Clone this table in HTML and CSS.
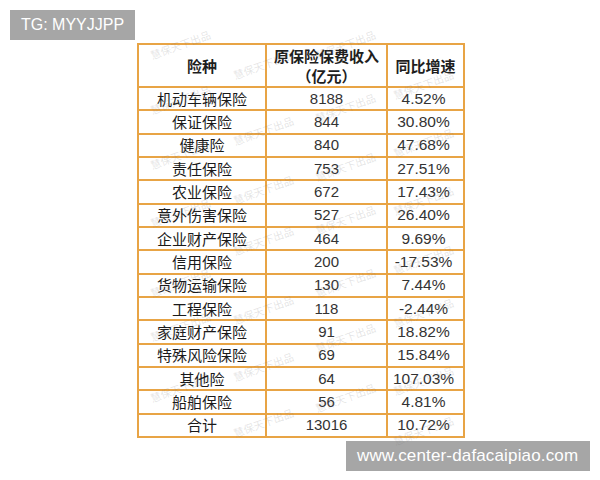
FILE: index.html
```html
<!DOCTYPE html>
<html lang="zh">
<head>
<meta charset="utf-8">
<link rel="stylesheet" href="styles.css">
</head>
<body>
<div class="page">
  <div class="tag">TG: MYYJJPP</div>
  <div class="table-wrap">
    <table class="data">
      <colgroup>
        <col class="c1"><col class="c2"><col class="c3">
      </colgroup>
      <thead>
        <tr class="head">
          <th>险种</th>
          <th>原保险保费收入<br>（亿元）</th>
          <th>同比增速</th>
        </tr>
      </thead>
      <tbody>
        <tr><td class="name">机动车辆保险</td><td class="num">8188</td><td class="pct">4.52%</td></tr>
        <tr><td class="name">保证保险</td><td class="num">844</td><td class="pct">30.80%</td></tr>
        <tr><td class="name">健康险</td><td class="num">840</td><td class="pct">47.68%</td></tr>
        <tr><td class="name">责任保险</td><td class="num">753</td><td class="pct">27.51%</td></tr>
        <tr><td class="name">农业保险</td><td class="num">672</td><td class="pct">17.43%</td></tr>
        <tr><td class="name">意外伤害保险</td><td class="num">527</td><td class="pct">26.40%</td></tr>
        <tr><td class="name">企业财产保险</td><td class="num">464</td><td class="pct">9.69%</td></tr>
        <tr><td class="name">信用保险</td><td class="num">200</td><td class="pct">-17.53%</td></tr>
        <tr><td class="name">货物运输保险</td><td class="num">130</td><td class="pct">7.44%</td></tr>
        <tr><td class="name">工程保险</td><td class="num">118</td><td class="pct">-2.44%</td></tr>
        <tr><td class="name">家庭财产保险</td><td class="num">91</td><td class="pct">18.82%</td></tr>
        <tr><td class="name">特殊风险保险</td><td class="num">69</td><td class="pct">15.84%</td></tr>
        <tr><td class="name">其他险</td><td class="num">64</td><td class="pct">107.03%</td></tr>
        <tr><td class="name">船舶保险</td><td class="num">56</td><td class="pct">4.81%</td></tr>
        <tr><td class="name">合计</td><td class="num">13016</td><td class="pct">10.72%</td></tr>
      </tbody>
    </table>
    <div class="marks" aria-hidden="true">
      <span class="wm" style="left:95px;top:16px">慧保天下出品</span>
      <span class="wm" style="left:95px;top:82px">慧保天下出品</span>
      <span class="wm" style="left:95px;top:141px">慧保天下出品</span>
      <span class="wm" style="left:95px;top:192px">慧保天下出品</span>
      <span class="wm" style="left:95px;top:261px">慧保天下出品</span>
      <span class="wm" style="left:95px;top:318px">慧保天下出品</span>
      <span class="wm" style="left:95px;top:374px">慧保天下出品</span>
      <span class="wm" style="left:177px;top:-4px">慧保天下出品</span>
      <span class="wm" style="left:177px;top:59px">慧保天下出品</span>
      <span class="wm" style="left:177px;top:118px">慧保天下出品</span>
      <span class="wm" style="left:177px;top:171px">慧保天下出品</span>
      <span class="wm" style="left:177px;top:234px">慧保天下出品</span>
      <span class="wm" style="left:177px;top:289px">慧保天下出品</span>
      <span class="wm" style="left:177px;top:349px">慧保天下出品</span>
      <span class="wm" style="left:255px;top:36px">慧保天下出品</span>
      <span class="wm" style="left:255px;top:94px">慧保天下出品</span>
      <span class="wm" style="left:255px;top:152px">慧保天下出品</span>
      <span class="wm" style="left:255px;top:211px">慧保天下出品</span>
      <span class="wm" style="left:255px;top:264px">慧保天下出品</span>
      <span class="wm" style="left:255px;top:332px">慧保天下出品</span>
      <span class="wm" style="left:255px;top:382px">慧保天下出品</span>
      <span class="wm" style="left:12px;top:-4px">慧保天下出品</span>
      <span class="wm" style="left:12px;top:51px">慧保天下出品</span>
      <span class="wm" style="left:12px;top:106px">慧保天下出品</span>
      <span class="wm" style="left:12px;top:164px">慧保天下出品</span>
      <span class="wm" style="left:12px;top:234px">慧保天下出品</span>
      <span class="wm" style="left:12px;top:278px">慧保天下出品</span>
      <span class="wm" style="left:12px;top:339px">慧保天下出品</span>
    </div>
  </div>
  <div class="site">www.center-dafacaipiao.com</div>
</div>
</body>
</html>
```

FILE: styles.css
```css
html, body {
  margin: 0;
  padding: 0;
  background: #ffffff;
}

.page {
  width: 600px;
  height: 480px;
  padding: 10px 0 0 0;
  box-sizing: border-box;
  display: flex;
  flex-direction: column;
  align-items: flex-start;
}

.tag {
  margin-left: 10px;
  width: 125px;
  height: 30px;
  background: #a6a6a6;
  color: #ffffff;
  font-family: "Liberation Sans", Arial, sans-serif;
  font-size: 16px;
  line-height: 30px;
  padding-left: 11px;
  box-sizing: border-box;
}

.table-wrap {
  position: relative;
  margin-top: 3px;
  margin-left: 137px;
}

.data {
  border-collapse: collapse;
  width: 326px;
  table-layout: fixed;
  font-family: "Noto Sans CJK SC", "Noto Sans", sans-serif;
  color: #1e1e1e;
  background: #ffffff;
}

.c1 { width: 128px; }
.c2 { width: 121px; }
.c3 { width: 77px; }

.data th,
.data td {
  border: 2px solid #e8a445;
  padding: 0;
  text-align: center;
  vertical-align: middle;
}

.head th {
  height: 41px;
  font-size: 15px;
  font-weight: 700;
  line-height: 20px;
}

.data td {
  height: 21.33px;
  font-size: 15px;
  line-height: 18px;
}

.data td.name {
  font-family: "Noto Sans CJK SC", sans-serif;
  color: #1a1a1a;
}

.data td.num {
  font-family: "Liberation Sans", Arial, sans-serif;
  color: #333333;
}

.data td.pct {
  font-family: "Liberation Sans Narrow", "Arial Narrow", "Liberation Sans", sans-serif;
  font-size: 15.5px;
  color: #333333;
  padding-right: 4px;
}

.marks {
  position: absolute;
  inset: 0;
  pointer-events: none;
}

.wm {
  position: absolute;
  width: 64px;
  font-family: "Noto Sans CJK SC", sans-serif;
  font-size: 10.5px;
  line-height: 12px;
  white-space: nowrap;
  color: rgba(120, 120, 120, 0.2);
  transform: rotate(-20deg);
}

.site {
  margin-top: 3px;
  margin-left: 346px;
  width: 244px;
  height: 30px;
  background: #a6a6a6;
  color: #ffffff;
  font-family: "Liberation Sans", Arial, sans-serif;
  font-size: 17px;
  letter-spacing: 0.15px;
  line-height: 30px;
  padding-left: 11px;
  box-sizing: border-box;
  white-space: nowrap;
}
```
